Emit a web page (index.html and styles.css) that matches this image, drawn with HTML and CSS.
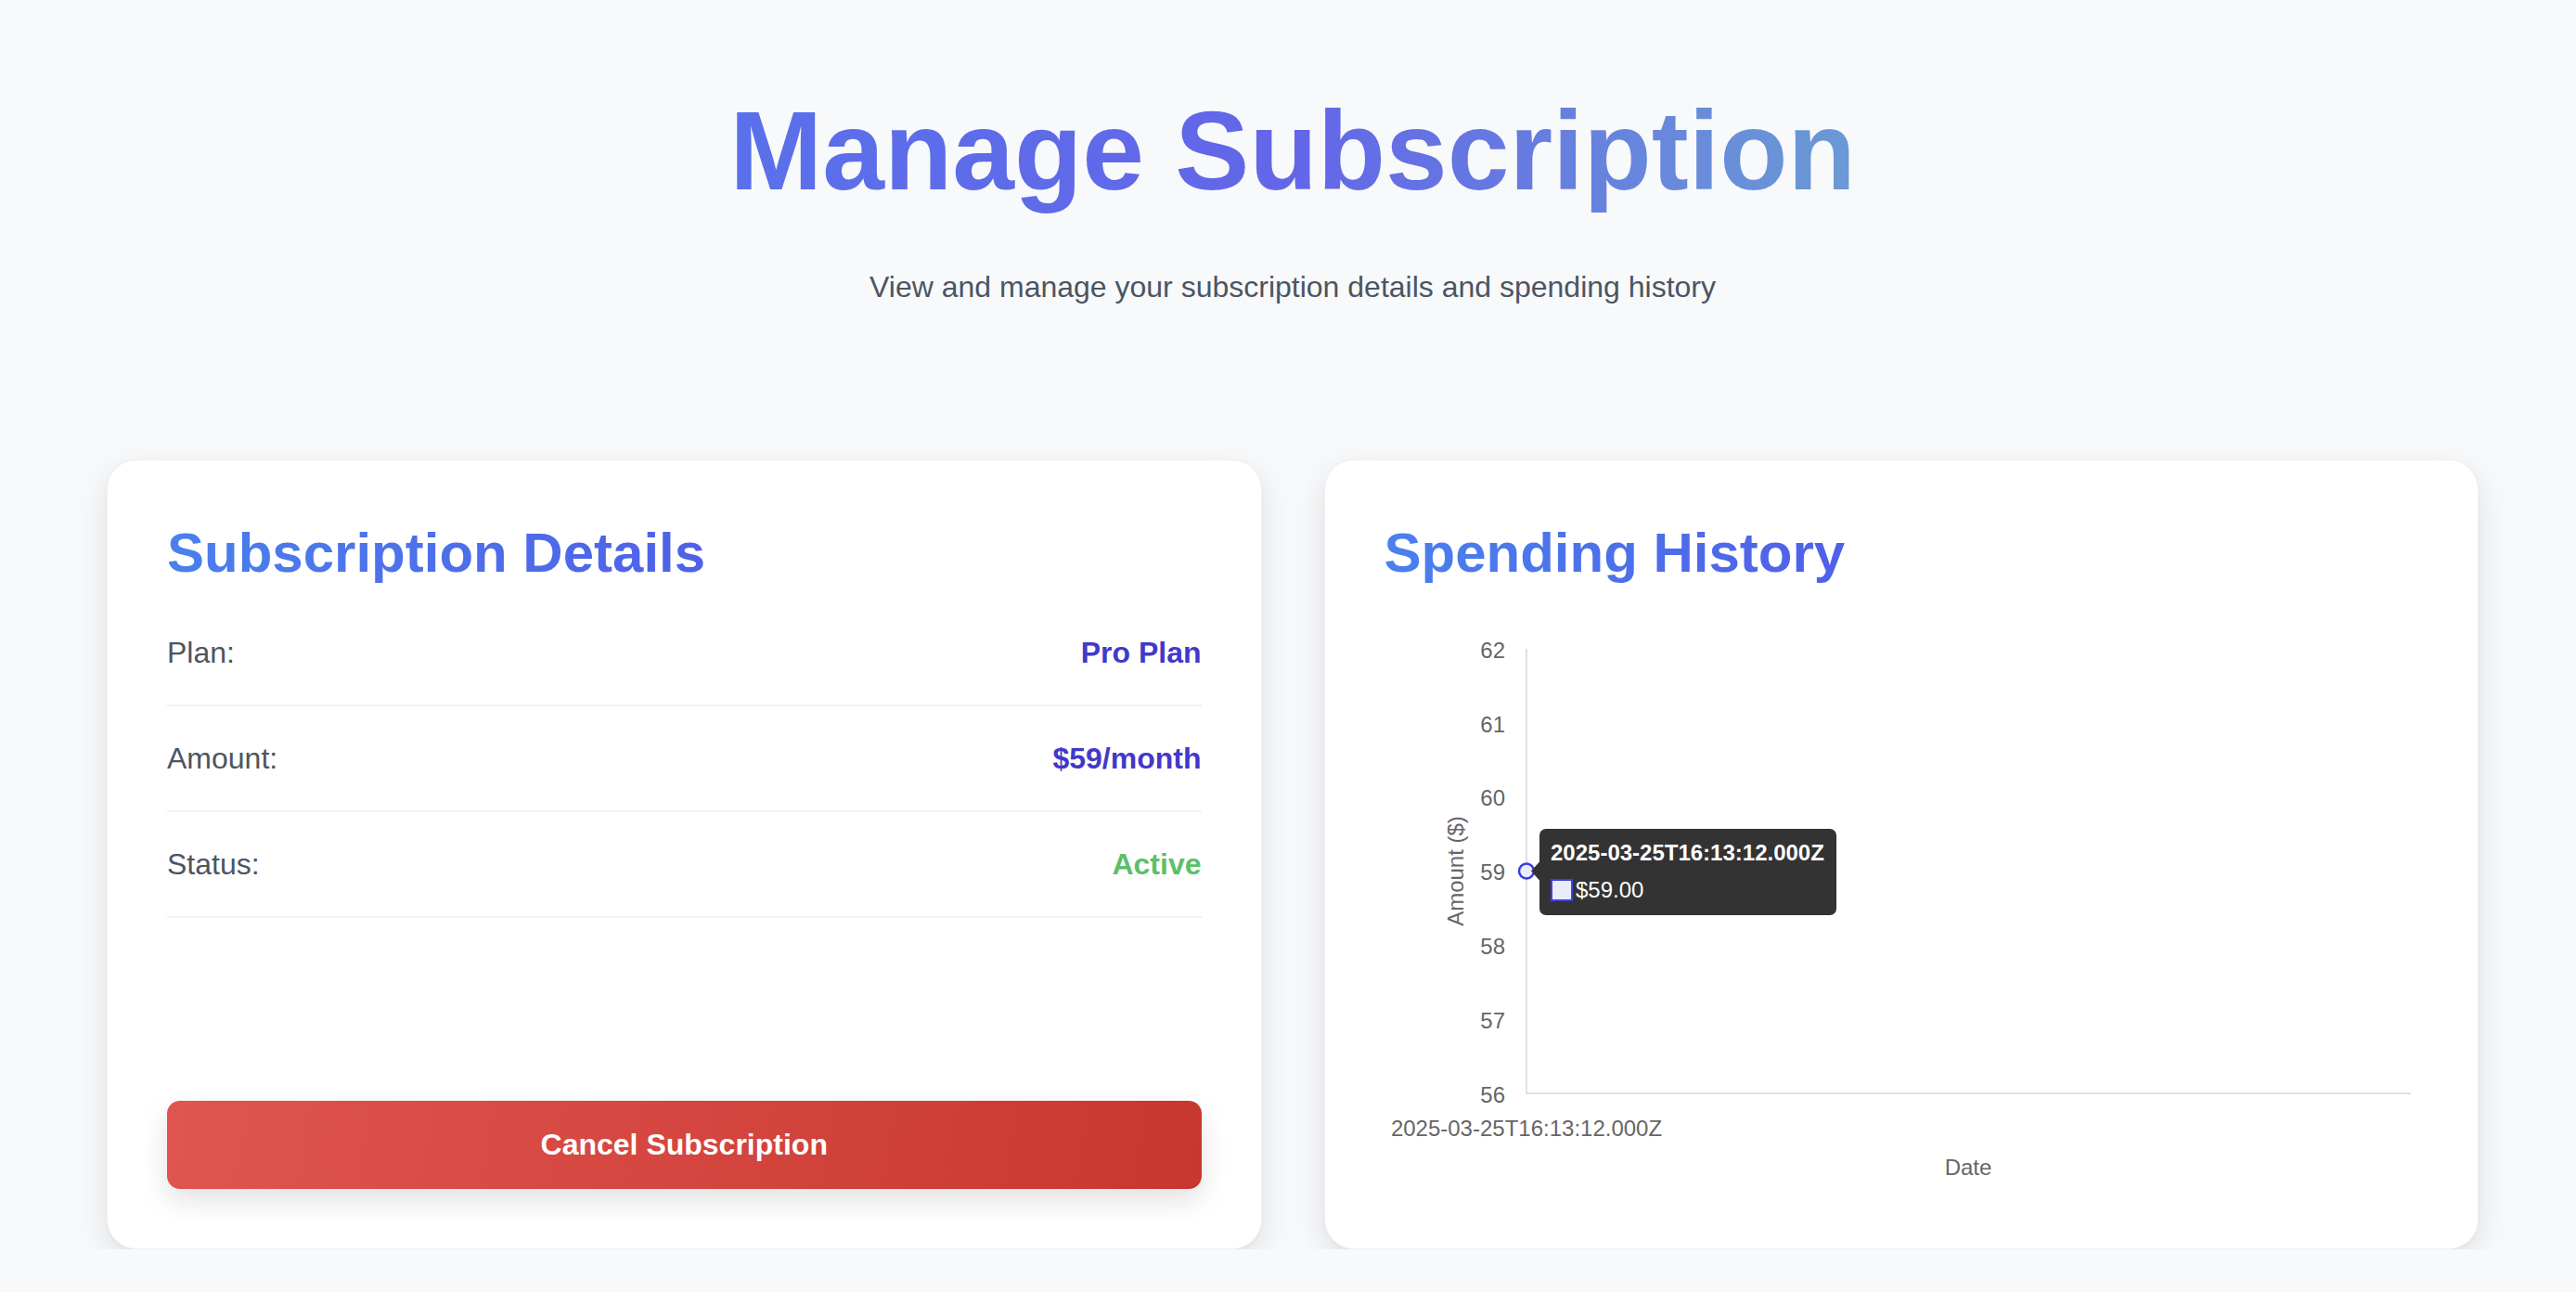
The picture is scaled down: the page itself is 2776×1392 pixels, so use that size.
FILE: index.html
```html
<!DOCTYPE html>
<html lang="en">
<head>
<meta charset="utf-8">
<title>Manage Subscription</title>
<link rel="stylesheet" href="styles.css">
</head>
<body>
<div class="page">
  <header class="header">
    <h1 class="title">Manage Subscription</h1>
    <p class="subtitle">View and manage your subscription details and spending history</p>
  </header>
  <main class="grid">
    <section class="card">
      <h2 class="card-title">Subscription Details</h2>
      <div class="rows">
        <div class="row"><span class="label">Plan:</span><span class="value">Pro Plan</span></div>
        <div class="row"><span class="label">Amount:</span><span class="value">$59/month</span></div>
        <div class="row"><span class="label">Status:</span><span class="value active">Active</span></div>
      </div>
      <button class="cancel" type="button">Cancel Subscription</button>
    </section>
    <section class="card">
      <h2 class="card-title">Spending History</h2>
      <div class="chart">
        <svg class="chart-svg" width="1114" height="634" viewBox="0 -1 1114 634">
          <line x1="153" y1="51" x2="153" y2="531" stroke="#e1e1e1" stroke-width="2"/>
          <line x1="152" y1="530" x2="1106" y2="530" stroke="#e1e1e1" stroke-width="2"/>
          <g class="tick" text-anchor="end">
            <text x="130" y="61">62</text>
            <text x="130" y="141">61</text>
            <text x="130" y="220">60</text>
            <text x="130" y="300">59</text>
            <text x="130" y="380">58</text>
            <text x="130" y="460">57</text>
            <text x="130" y="540">56</text>
          </g>
          <text class="tick" x="153" y="576" text-anchor="middle">2025-03-25T16:13:12.000Z</text>
          <text class="tick" x="629" y="618" text-anchor="middle">Date</text>
          <text class="tick" transform="translate(85 290.5) rotate(-90)" text-anchor="middle">Amount ($)</text>
          <circle cx="153" cy="290.5" r="8" fill="#ebebfa" stroke="#3b3bdf" stroke-width="2.5"/>
          <rect x="167" y="245" width="320" height="93" rx="7" fill="#333333"/>
          <polygon points="167,280.5 158,290.5 167,300.5" fill="#333333"/>
          <text class="tip-title" x="179" y="279">2025-03-25T16:13:12.000Z</text>
          <rect x="180" y="300" width="22" height="22" fill="#ebebfa" stroke="#4040dd" stroke-width="2"/>
          <text class="tip-body" x="206" y="319">$59.00</text>
        </svg>
      </div>
    </section>
  </main>
</div>
</body>
</html>
```

FILE: styles.css
```css
html, body {
  margin: 0;
  padding: 0;
}

body {
  background: #f8f9fa;
  font-family: "Liberation Sans", Arial, Helvetica, sans-serif;
}

.page {
  padding: 93px 105px 0 115px;
}

.header {
  text-align: center;
  margin-bottom: 167px;
}

.title {
  width: fit-content;
  margin: 0 auto;
  font-size: 120px;
  line-height: 138px;
  font-weight: 700;
  background: linear-gradient(90deg, #5a70ea 0%, #6366e8 50%, #6a9ad5 100%);
  -webkit-background-clip: text;
  background-clip: text;
  color: transparent;
}

.subtitle {
  margin: 60px 0 0;
  font-size: 32px;
  line-height: 37px;
  color: #4b5563;
}

.grid {
  display: grid;
  grid-template-columns: 1fr 1fr;
  column-gap: 67px;
}

.card {
  background: #ffffff;
  border: 1px solid #eef0f3;
  border-radius: 32px;
  padding: 64px;
  box-shadow: 0 12px 36px rgba(0, 0, 0, 0.1), 0 2px 4px rgba(0, 0, 0, 0.03);
  display: flex;
  flex-direction: column;
}

.card-title {
  width: fit-content;
  margin: 0 0 15px;
  font-size: 60px;
  line-height: 72px;
  font-weight: 700;
  background: linear-gradient(90deg, #4a80ec 0%, #5060e8 100%);
  -webkit-background-clip: text;
  background-clip: text;
  color: transparent;
}

.row {
  display: flex;
  justify-content: space-between;
  align-items: center;
  padding: 32px 0;
  font-size: 32px;
  line-height: 48px;
  border-bottom: 2px solid #f0f1f3;
}

.label {
  color: #4b5563;
}

.value {
  font-weight: 700;
  color: #4338ca;
}

.value.active {
  color: #5cbf6a;
}

.cancel {
  margin-top: auto;
  height: 95px;
  border: 0;
  border-radius: 14px;
  background: linear-gradient(100deg, #e0554f 0%, #c8372f 100%);
  color: #ffffff;
  font-family: "Liberation Sans", Arial, sans-serif;
  font-size: 32px;
  font-weight: 700;
  box-shadow: 0 12px 30px rgba(0, 0, 0, 0.12);
  cursor: pointer;
}

.chart {
  height: 634px;
}

.chart-svg {
  display: block;
}

.tick {
  font-family: "Liberation Sans", Arial, sans-serif;
  font-size: 24px;
  fill: #666666;
}

.tip-title {
  font-family: "Liberation Sans", Arial, sans-serif;
  font-size: 24px;
  font-weight: 700;
  fill: #ffffff;
}

.tip-body {
  font-family: "Liberation Sans", Arial, sans-serif;
  font-size: 24px;
  fill: #ffffff;
}
```
